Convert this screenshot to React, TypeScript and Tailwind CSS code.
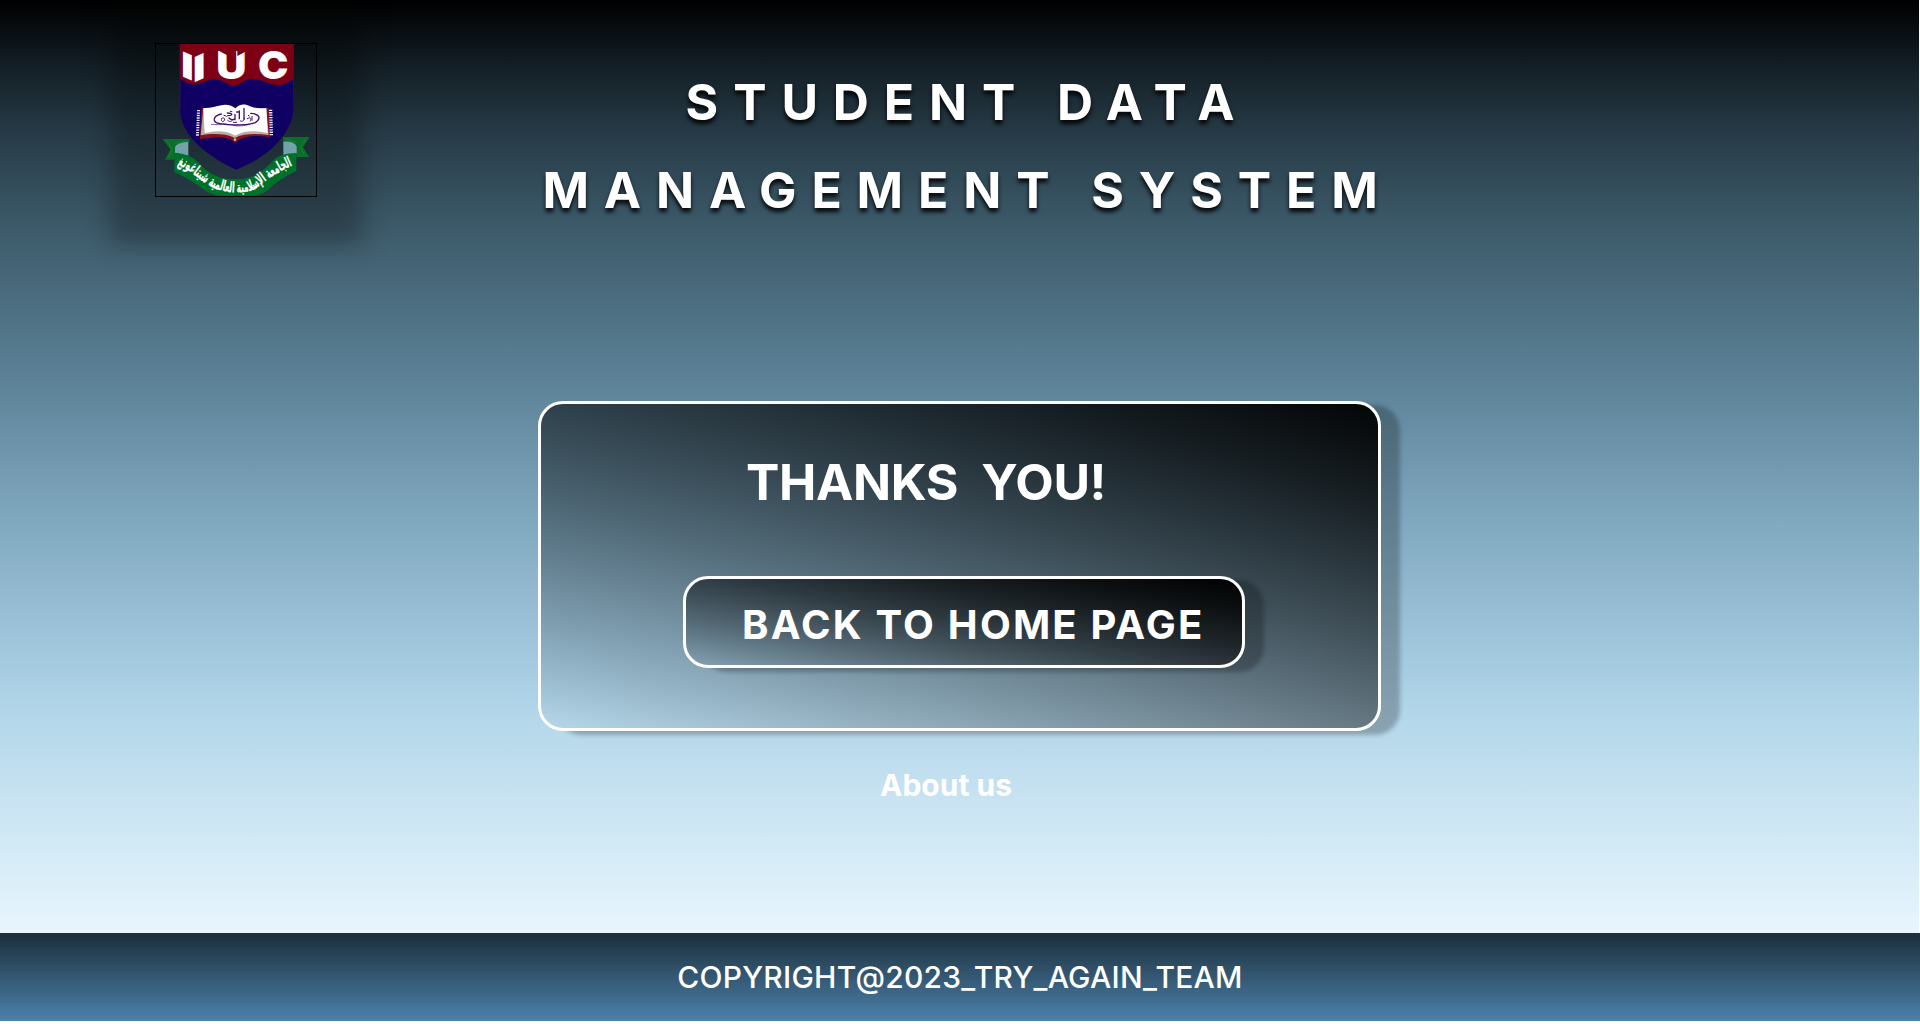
import React from "react";

const FRINGE = Array.from({ length: 11 }, (_, i) => i);

function Crest() {
  return (
    <svg viewBox="45 39 486 462" className="relative block h-[154px] w-[162px]" role="img" aria-label="IIUC">
      {/* shield */}
      <path d="M120 40H461V226C461 320 370 388 289 419C212 384 120 320 120 236Z" fill="#110063" />
      <path
        d="M120 40H461V148C446 155 434 164 418 165C382 166 366 145 330 147C312 149 300 166 283 167C262 168 250 147 222 148C200 148 184 166 154 163C138 160 130 151 120 147Z"
        fill="#7e0014"
      />
      <path d="M120 40V236M461 40V226" stroke="#2d2440" strokeWidth="2" />
      {/* initials */}
      <g fill="#fff" fontFamily="Inter" fontWeight="900" fontSize="100">
        <text transform="matrix(1.32 0.58 0 1.04 123 137)">I</text>
        <text transform="matrix(1.32 -0.58 0 1.04 158 159)">I</text>
        <text transform="matrix(1.26 0 0 1.13 229 146)">U</text>
        <text transform="matrix(1.22 0 0 1.17 354 148)">C</text>
      </g>
      {/* bevels on the tips of the U */}
      <path d="M232 60L266 78V60ZM292 60V78L326 60Z" fill="#7e0014" />
      {/* open book */}
      <path
        d="M184 236L190 234L206 311C230 306 258 303 284 322C312 303 344 306 372 310L380 234L387 235L390 322C350 314 318 317 294 331Q286 347 276 331C248 316 214 323 180 328Z"
        fill="#87101f"
      />
      <path d="M190 236L182 316C212 311 256 309 284 324C312 309 352 311 386 315L379 236Z" fill="#b9aca0" />
      <path
        d="M190 234C208 236 228 229 244 226C260 221 278 228 286 235C298 222 314 220 330 229C346 236 362 235 379 234L383 309C350 302 314 299 285 317C256 298 222 303 194 309Z"
        fill="#fff"
      />
      <circle cx="285" cy="329" r="4" fill="#c9b5a5" />
      <g stroke="#e8e8ff" strokeWidth="4">
        {FRINGE.map((i) => (
          <path key={i} d={`M${171 - i * 0.3} ${242 + i * 7.3}h9M${387 + i * 0.2} ${241 + i * 7.3}h10`} />
        ))}
      </g>
      <g fill="none" stroke="#451072" strokeLinecap="round">
        <path d="M244 252C218 258 215 277 240 281C276 288 330 285 346 278C366 264 357 251 332 250" strokeWidth="4" />
        <path d="M214 283C226 284 244 285 258 281M282 287C302 289 316 287 329 283" strokeWidth="2" />
        <path d="M312 235V268M298 243V266M285 253V269M262 249C277 249 282 257 263 257M290 246h7M267 264c5 6 14 7 18 2" strokeWidth="4" />
        <path
          d="M244 266c5-5 12-2 9 5-3 7-10 3-9-2M263 271c7 6 12 4 15-2M301 273c7 3 12-1 12-9M322 266c9-6 14-1 9 7M336 259v12M252 256l7 3M325 256l3 2M271 244l5 1M280 277h10"
          strokeWidth="3"
        />
      </g>
      {/* ribbon */}
      <path d="M68 327H148V336L112 346L108 389H75L91 359Z" fill="#0a7029" />
      <path d="M429 321H509L489 351L507 381H470L463 341L429 335Z" fill="#0a7029" />
      <path d="M82 334L97 358L86 382M142 332L104 340M495 328L481 351L492 375M436 326L468 338" fill="none" stroke="#1b8240" strokeWidth="2" />
      <path d="M145 335V378L105 370V352Q108 338 145 335Z" fill="#73a2aa" />
      <path d="M430 335Q463 333 470 350V370L430 378Z" fill="#73a2aa" />
      <path
        d="M103 368C146 370 168 388 187 410C216 438 248 448 285 448C338 447 365 427 390 401C412 377 435 367 469 370V424C428 442 404 461 384 481C362 500 326 500 284 500C238 500 208 493 188 476C166 460 136 442 103 426Z"
        fill="#00712b"
      />
      <path id="motto" d="M106 402C152 419 168 442 205 465C243 489 313 497 351 473C392 440 423 420 463 404" fill="none" />
      <text
        fill="#fff"
        stroke="#fff"
        strokeWidth="1"
        fontFamily="'DejaVu Sans', sans-serif"
        fontSize="43"
        fontWeight="700"
        direction="rtl"
        textAnchor="middle"
      >
        <textPath href="#motto" startOffset="50%" textLength="390" lengthAdjust="spacingAndGlyphs">
          الجامعة الإسلامية العالمية شيتاغونغ
        </textPath>
      </text>
      <rect x="46.5" y="40.5" width="483" height="459" fill="none" stroke="#000" strokeWidth="3" />
    </svg>
  );
}

export default function App() {
  return (
    <div className="h-[1024px] w-full overflow-hidden bg-white font-['Inter',sans-serif] text-white">
      <main className="flex h-[933px] w-[1919px] flex-col overflow-hidden bg-[linear-gradient(180deg,#000_0px,#131e25_65px,#263a46_131px,#3b5867_220px,#5f859b_392px,#80a8bf_522px,#a2c8de_653px,#b4d7ea_718px,#e8f6fe_933px)]">
        <header className="grid h-[401px] shrink-0 grid-cols-[538px_843px_1fr]">
          <div className="relative ml-[155px] mt-[43px] h-[154px] w-[162px]">
            <div className="absolute -inset-x-[46px] -bottom-[48px] -top-[40px] bg-black/27 blur-[13px]" />
            <Crest />
          </div>
          <h1 className="-mr-[16px] mt-[58px] text-center text-[50px] font-bold leading-[88px] tracking-[14.85px] [text-shadow:0_4px_4px_rgba(0,0,0,0.9)]">
            STUDENT DATA
            <br />
            MANAGEMENT SYSTEM
          </h1>
        </header>

        <section className="ml-[538px] flex h-[330px] w-[843px] shrink-0 flex-col rounded-[25px] border-[3px] border-white bg-[linear-gradient(198deg,rgba(0,0,0,0.97),rgba(0,0,0,0))] bg-origin-border shadow-[19px_4px_4px_rgba(0,0,0,0.25)]">
          <h2 className="ml-[205px] mt-[48px] whitespace-pre text-[50px] font-bold leading-[60px] tracking-[-0.36px]">THANKS  YOU!</h2>
          <button className="ml-[142px] mt-[64px] flex h-[92px] w-[562px] items-center rounded-[25px] border-[3px] border-white bg-[linear-gradient(to_bottom_left,#000,rgba(0,0,0,0))] bg-origin-border pl-[56px] pt-[6px] text-[40px] font-bold leading-none tracking-[2.2px] shadow-[19px_4px_4px_rgba(0,0,0,0.25)]">
            <span className="whitespace-nowrap">BACK TO HOME PAGE</span>
          </button>
        </section>

        <a className="ml-[880px] mt-[36px] text-[30px] font-bold leading-[36px]">About us</a>
      </main>

      <footer className="flex h-[88px] items-center justify-center bg-linear-to-b from-[#1c2f3c] via-[#345873] to-[#4b81ab] text-[30px] font-medium leading-none tracking-[0.23px]">
        COPYRIGHT@2023_TRY_AGAIN_TEAM
      </footer>
    </div>
  );
}
